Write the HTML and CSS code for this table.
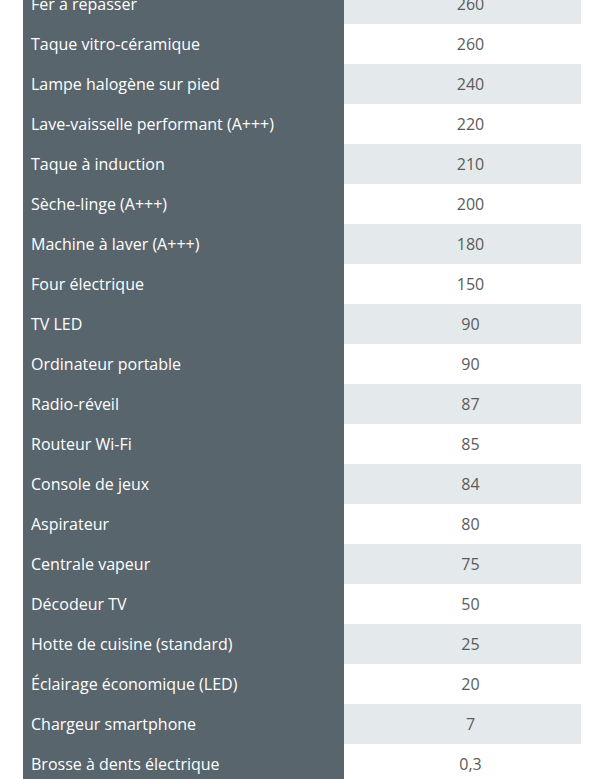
FILE: index.html
```html
<!DOCTYPE html>
<html lang="fr">
<head>
    <meta charset="UTF-8">
    <title>Consommation des appareils</title>
    <link rel="stylesheet" href="styles.css">
</head>
<body>
    <div class="page">
        <table class="conso-table">
            <tbody>
                <tr><th>Fer à repasser</th><td>260</td></tr>
                <tr><th>Taque vitro-céramique</th><td>260</td></tr>
                <tr><th>Lampe halogène sur pied</th><td>240</td></tr>
                <tr><th>Lave-vaisselle performant (A+++)</th><td>220</td></tr>
                <tr><th>Taque à induction</th><td>210</td></tr>
                <tr><th>Sèche-linge (A+++)</th><td>200</td></tr>
                <tr><th>Machine à laver (A+++)</th><td>180</td></tr>
                <tr><th>Four électrique</th><td>150</td></tr>
                <tr><th>TV LED</th><td>90</td></tr>
                <tr><th>Ordinateur portable</th><td>90</td></tr>
                <tr><th>Radio-réveil</th><td>87</td></tr>
                <tr><th>Routeur Wi-Fi</th><td>85</td></tr>
                <tr><th>Console de jeux</th><td>84</td></tr>
                <tr><th>Aspirateur</th><td>80</td></tr>
                <tr><th>Centrale vapeur</th><td>75</td></tr>
                <tr><th>Décodeur TV</th><td>50</td></tr>
                <tr><th>Hotte de cuisine (standard)</th><td>25</td></tr>
                <tr><th>Éclairage économique (LED)</th><td>20</td></tr>
                <tr><th>Chargeur smartphone</th><td>7</td></tr>
                <tr><th>Brosse à dents électrique</th><td>0,3</td></tr>
            </tbody>
        </table>
    </div>
</body>
</html>
```

FILE: styles.css
```css
body {
    margin: 0;
    background: #fff;
    font-family: "Open Sans", "Noto Sans", sans-serif;
    overflow: hidden;
}
.page {
    padding: 0 15px 0 23px;
    margin-top: -16px;
}
.conso-table {
    width: 558px;
    border-collapse: collapse;
    font-size: 16px;
}
.conso-table th,
.conso-table td {
    height: 40px;
    padding: 0 8px;
    box-sizing: border-box;
    font-weight: normal;
}
.conso-table th {
    width: 321px;
    background: #59656d;
    color: #fff;
    text-align: left;
}
.conso-table td {
    padding: 0 8px 0 24px;
    color: #5b5b5b;
    text-align: center;
    background: #fff;
}
.conso-table tr:nth-child(odd) td {
    background: #e4e9eb;
}
```
